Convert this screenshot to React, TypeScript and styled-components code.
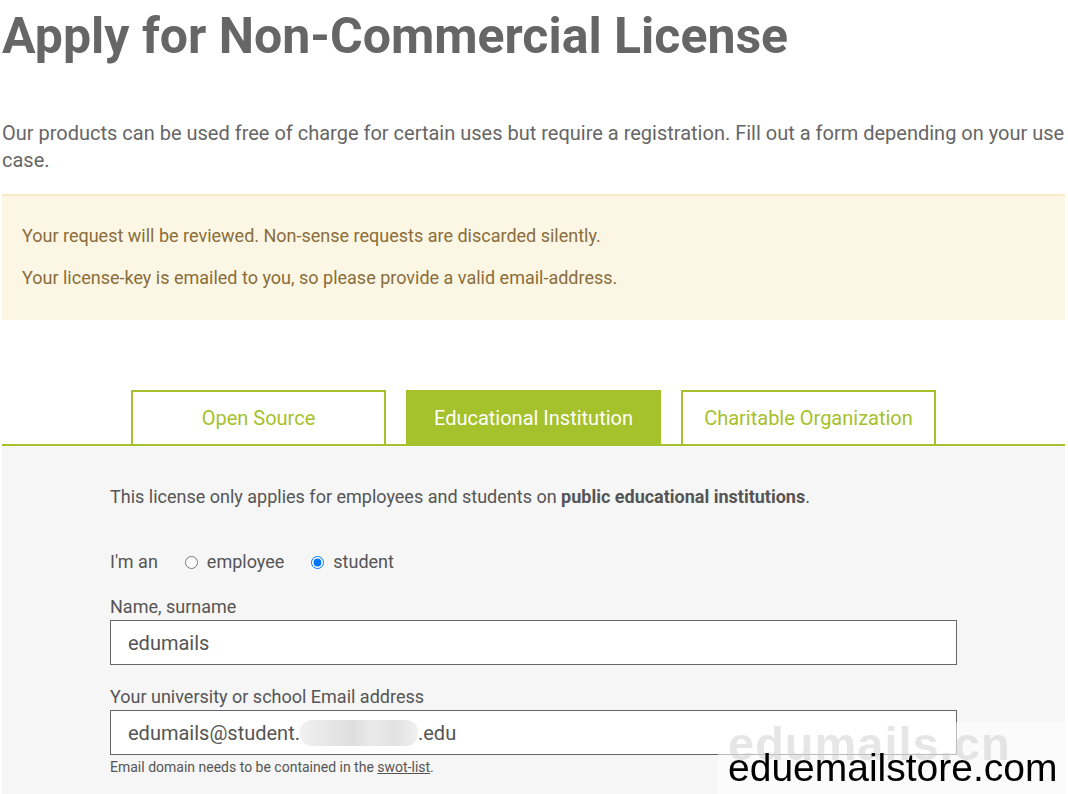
import React from "react";
import styled, { createGlobalStyle } from "styled-components";

const Global = createGlobalStyle`
  html, body { margin: 0; padding: 0; background: #fff; }
  body { font-family: Roboto, "Noto Sans", Arial, sans-serif; color: #666; overflow: hidden; }
  * { box-sizing: border-box; }
`;

const Page = styled.div`
  width: 1063px;
  margin-left: 2px;
  height: 794px;
  overflow: hidden;
`;

const Title = styled.h1`
  margin: 0;
  padding-top: 6px;
  font-size: 50px;
  line-height: 60px;
  font-weight: 700;
  color: #666;
`;

const Intro = styled.p`
  margin: 54px 0 20px;
  font-size: 20px;
  line-height: 27px;
  color: #666;
`;

const Alert = styled.div`
  background: #fcf7e4;
  border-top: 2px solid #faebcc;
  color: #8a6d3b;
  padding: 29px 20px 31px;
  font-size: 18px;
  line-height: 22px;
`;

const AlertLine = styled.p`
  margin: 0;
  & + & { margin-top: 20px; }
`;

const Tabs = styled.div`
  margin-top: 70px;
  display: flex;
  justify-content: center;
  gap: 20px;
  border-bottom: 2px solid #a5c12b;
`;

const Tab = styled.div<{ $active?: boolean }>`
  width: 255px;
  height: 54px;
  display: flex;
  align-items: center;
  justify-content: center;
  font-size: 20px;
  border: 2px solid #a5c12b;
  border-bottom: none;
  background: ${(p) => (p.$active ? "#a5c12b" : "#fff")};
  color: ${(p) => (p.$active ? "#fff" : "#a5c12b")};
`;

const Panel = styled.div`
  background: #f6f6f6;
  padding: 38px 0 40px;
  height: 400px;
`;

const Inner = styled.div`
  width: 847px;
  margin: 0 auto;
  color: #555;
`;

const Lead = styled.p`
  margin: 0 0 39px;
  font-size: 18px;
  line-height: 26px;
  b { font-weight: 700; }
`;

const RadioRow = styled.div`
  display: flex;
  align-items: center;
  font-size: 18px;
  line-height: 26px;
  margin-bottom: 21px;
`;

const RadioLead = styled.span`
  margin-right: 27px;
`;

const RadioLabel = styled.label`
  display: inline-flex;
  align-items: center;
  margin-right: 27px;
  input {
    margin: 0 9px 0 0;
    width: 13px;
    height: 13px;
    accent-color: #0075ff;
  }
`;

const Field = styled.div`
  & + & { margin-top: 21px; }
`;

const Label = styled.div`
  font-size: 18px;
  line-height: 22px;
  margin-bottom: 2px;
`;

const Input = styled.div`
  height: 45px;
  background: #fff;
  border: 1px solid #666;
  padding: 0 17px;
  display: flex;
  align-items: center;
  font-size: 20px;
  color: #555;
`;

const Blur = styled.span`
  display: inline-block;
  width: 118px;
  height: 26px;
  border-radius: 12px;
  background: linear-gradient(90deg, #f1f1f1 0%, #e4e4e4 30%, #dedede 45%, #eaeaea 60%, #e2e2e2 80%, #f0f0f0 100%);
  vertical-align: middle;
`;

const Help = styled.div`
  font-size: 14px;
  line-height: 16px;
  margin-top: 4px;
  a { color: #555; text-decoration: underline; }
`;

const Watermark = styled.div`
  position: fixed;
  left: 718px;
  top: 722px;
  width: 350px;
  height: 72px;
  background: rgba(255, 255, 255, 0.55);
`;

const WaterFaint = styled.div`
  position: absolute;
  left: 10px;
  top: -5px;
  font-family: Arial, "Liberation Sans", sans-serif;
  font-weight: 700;
  font-size: 47px;
  line-height: 54px;
  color: rgba(200, 200, 200, 0.45);
  letter-spacing: 1px;
`;

const WaterText = styled.div`
  position: absolute;
  left: 10px;
  top: 24px;
  font-family: Arial, "Liberation Sans", sans-serif;
  font-size: 39px;
  line-height: 44px;
  color: #000;
`;

export default function App() {
  return (
    <>
      <Global />
      <Page>
        <Title>Apply for Non-Commercial License</Title>
        <Intro>
          Our products can be used free of charge for certain uses but require a registration. Fill out a form depending on your use case.
        </Intro>
        <Alert>
          <AlertLine>Your request will be reviewed. Non-sense requests are discarded silently.</AlertLine>
          <AlertLine>Your license-key is emailed to you, so please provide a valid email-address.</AlertLine>
        </Alert>
        <Tabs>
          <Tab>Open Source</Tab>
          <Tab $active>Educational Institution</Tab>
          <Tab>Charitable Organization</Tab>
        </Tabs>
        <Panel>
          <Inner>
            <Lead>
              This license only applies for employees and students on <b>public educational institutions</b>.
            </Lead>
            <RadioRow>
              <RadioLead>I'm an</RadioLead>
              <RadioLabel>
                <input type="radio" name="role" readOnly />
                employee
              </RadioLabel>
              <RadioLabel>
                <input type="radio" name="role" defaultChecked />
                student
              </RadioLabel>
            </RadioRow>
            <Field>
              <Label>Name, surname</Label>
              <Input>edumails</Input>
            </Field>
            <Field>
              <Label>Your university or school Email address</Label>
              <Input>
                edumails@student.<Blur />.edu
              </Input>
              <Help>
                Email domain needs to be contained in the <a href="#">swot-list</a>.
              </Help>
            </Field>
          </Inner>
        </Panel>
      </Page>
      <Watermark>
        <WaterFaint>edumails.cn</WaterFaint>
        <WaterText>eduemailstore.com</WaterText>
      </Watermark>
    </>
  );
}
